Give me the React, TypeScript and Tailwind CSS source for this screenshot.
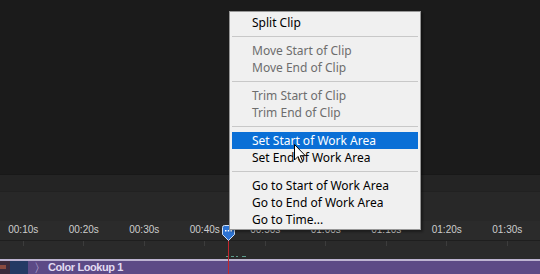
import React from 'react';

type MenuEntry = { label: string; disabled?: boolean; active?: boolean } | 'sep';

const menuItems: MenuEntry[] = [
  { label: 'Split Clip' },
  'sep',
  { label: 'Move Start of Clip', disabled: true },
  { label: 'Move End of Clip', disabled: true },
  'sep',
  { label: 'Trim Start of Clip', disabled: true },
  { label: 'Trim End of Clip', disabled: true },
  'sep',
  { label: 'Set Start of Work Area', active: true },
  { label: 'Set End of Work Area' },
  'sep',
  { label: 'Go to Start of Work Area' },
  { label: 'Go to End of Work Area' },
  { label: 'Go to Time...' },
];

const rulerLabels = ['00:10s', '00:20s', '00:30s', '00:40s', '00:50s', '01:00s', '01:10s', '01:20s', '01:30s'];

// --- Context menu ---
const ContextMenu: React.FC = () => (
  <div
    className="absolute left-[229px] top-[11px] w-[192px] bg-[#f0f0f0] border border-[#979797] px-[2px] pt-[2px] pb-[1px] shadow-[2px_2px_2px_rgba(0,0,0,0.35)]"
    style={{ fontFamily: '"Noto Sans", "Open Sans", sans-serif' }}
  >
    {menuItems.map((item, i) =>
      item === 'sep' ? (
        <div key={i} className="h-[11px] flex items-center">
          <div className="h-px w-full bg-[#c8c8c8]" />
        </div>
      ) : (
        <div
          key={i}
          className={`h-[17px] flex items-center pl-[20px] text-[12px] leading-none ${
            item.active ? 'bg-[#0a6fd6] text-white' : item.disabled ? 'text-[#6d6d6d]' : 'text-black'
          }`}
        >
          {item.label}
        </div>
      )
    )}
  </div>
);

// --- Mouse pointer ---
const Cursor: React.FC = () => (
  <svg className="absolute left-[294px] top-[144px]" width="13" height="20" viewBox="0 0 13 20">
    <path d="M0.5 0.5 L0.5 16 L4 12.5 L6.6 18.6 L8.8 17.7 L6.3 11.7 L11.3 11.7 Z" fill="#fff" stroke="#000" strokeWidth="1" strokeLinejoin="miter" />
  </svg>
);

// --- Playhead ---
const Playhead: React.FC = () => (
  <>
    <div className="absolute left-[228px] top-[238px] w-px h-[36px] bg-[#c1272d]" />
    <svg className="absolute left-[222px] top-[225px]" width="13" height="16" viewBox="0 0 13 16">
      <path d="M2.5 0.5 H10.5 Q12.5 0.5 12.5 2.5 V9.5 L6.5 15.5 L0.5 9.5 V2.5 Q0.5 0.5 2.5 0.5 Z" fill="#2d73d2" stroke="#cfe0f7" strokeWidth="1" />
      <rect x="3" y="5" width="1.5" height="1.5" fill="#fff" />
      <rect x="5.75" y="5" width="1.5" height="1.5" fill="#fff" />
      <rect x="8.5" y="5" width="1.5" height="1.5" fill="#fff" />
    </svg>
  </>
);

export default function App() {
  return (
    <div className="relative w-[540px] h-[274px] overflow-hidden bg-[#1b1b1b]" style={{ fontFamily: '"Liberation Sans", Arial, sans-serif' }}>
      <div className="flex flex-col h-full">
        {/* viewer */}
        <div className="h-[174px] bg-[#1b1b1b]" />
        {/* track headers */}
        <div className="h-[17px] bg-[#242424] border-t border-[#181818]" />
        <div className="h-[30px] bg-[#282828] border-t border-[#212121]" />
        {/* ruler */}
        <div className="h-[20px] bg-[#2b2b2b] border-b border-[#1e1e1e] flex -ml-[7px]">
          {rulerLabels.map((l) => (
            <div key={l} className="w-[60.5px] shrink-0 flex flex-col items-center">
              <span className="text-[10px] leading-none mt-[4px] text-[#cdcdcd]">{l}</span>
            </div>
          ))}
        </div>
        {/* tick row */}
        <div className="h-[18px] bg-[#2a2a2a] relative flex -ml-[7px]">
          {rulerLabels.map((l) => (
            <div key={l} className="w-[60.5px] shrink-0 flex justify-center">
              <div className="w-px h-[5px] bg-[#3c3c3c]" />
            </div>
          ))}
          <div className="absolute left-[233px] top-[15px] flex gap-[2px]">
            <div className="w-[3px] h-px bg-[#5d9c8c]" />
            <div className="w-[3px] h-px bg-[#5d9c8c]" />
            <div className="w-[2px] h-px bg-[#5d9c8c]" />
            <div className="w-[4px] h-px ml-[2px] bg-[#5d9c8c]" />
          </div>
        </div>
        {/* clip track */}
        <div className="h-[2px] bg-[#bdb4d2]" />
        <div className="flex-1 bg-[#5c4a86] flex items-center">
          <div className="w-[28px] h-full flex">
            <div className="w-[10px] h-full bg-[#3a2a3c]">
              <div className="w-[6px] h-[4px] mt-[4px] bg-[#8a4a40]" />
            </div>
            <div className="w-[18px] h-full bg-[#243a64]" />
          </div>
          <span className="ml-[6px] text-[12px] leading-none text-[#cfc6e6]">〉</span>
          <span className="ml-[2px] text-[11px] font-bold leading-none tracking-[-0.4px] text-[#e2dbf2]">Color Lookup 1</span>
        </div>
      </div>
      <Playhead />
      <ContextMenu />
      <Cursor />
    </div>
  );
}
